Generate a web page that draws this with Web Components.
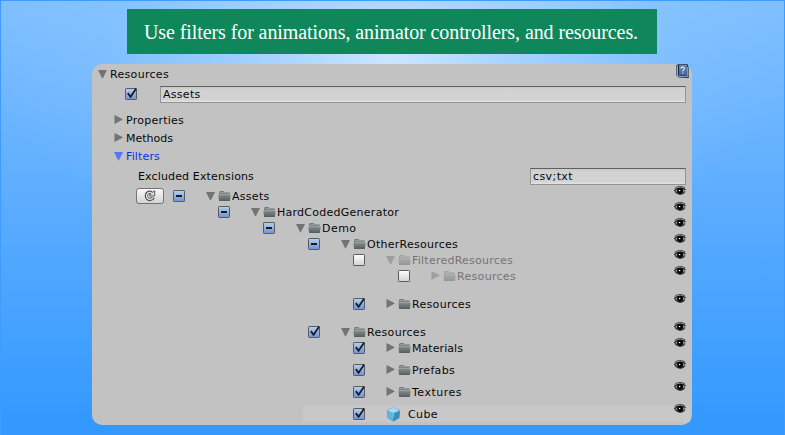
<!DOCTYPE html>
<html lang="en"><head><meta charset="utf-8"><title>Resource filters</title>
<style>
html,body{height:100%;margin:0}
body{overflow:hidden;font:11px/16px "DejaVu Sans",Verdana,sans-serif;color:#080808}
</style></head><body>
<filter-page></filter-page>
<script>
const define=(name,html,init)=>customElements.define(name,class extends HTMLElement{
  connectedCallback(){
    if(this.shadowRoot)return;
    const t=document.createElement('template');
    t.innerHTML=html;
    this.attachShadow({mode:'open'}).append(t.content.cloneNode(true));
    if(init)init(this,this.shadowRoot);
  }
});

// Label whose tracking is set so that its text spans the given width.
define('ui-label','<style>:host{display:block;white-space:pre;line-height:16px;padding-top:var(--drop,0)}span{display:inline-block}</style><span><slot></slot></span>',(el,root)=>{
  const s=root.querySelector('span'),w=+el.getAttribute('span');
  if(w)s.style.letterSpacing=((w-s.getBoundingClientRect().width)/el.textContent.length)+'px';
});

define('ui-arrow','<style>:host{display:block;width:9px;height:9px;color:#737373}:host([right]){margin-top:-1px}svg{display:block}:host([right]) .d,:host(:not([right])) .r{display:none}</style><svg width="9" height="9"><path class="d" d="M0 0H9L4.9 8.2H4.1z" fill="currentColor"/><path class="r" d="M.5 0L8.4 4.1V4.7L.5 9z" fill="currentColor"/></svg>');

define('ui-check',`<style>:host{display:block;width:14px;height:14px}svg{display:block}
.b{fill:url(#w)}:host([state]) .b{fill:url(#g)}.m,.c{display:none}:host([state=mixed]) .m,:host([state=on]) .c{display:block}</style>
<svg width="14" height="14"><defs><linearGradient id="g" x2="0" y2="1"><stop stop-color="#b8cfee"/><stop offset="1" stop-color="#6f93d0"/></linearGradient><linearGradient id="w" x2="0" y2="1"><stop stop-color="#fff"/><stop offset="1" stop-color="#d2d2d2"/></linearGradient></defs>
<rect class="b" x="1.5" y="1.5" width="11" height="11" rx=".7" stroke="#5b5b5b"/><path class="m" d="M4 6H10V8H4z" fill="#151b24"/><path class="c" d="M3.8 6.1L6.6 9.7L12.2 1.6" fill="none" stroke="#151b2b" stroke-width="1.8"/></svg>`);

define('ui-folder',`<style>:host{display:block;width:13px;height:12px}svg{display:block}</style>
<svg width="13" height="12"><defs><linearGradient id="f" x2="0" y2="1"><stop stop-color="#8a9090"/><stop offset="1" stop-color="#515e60"/></linearGradient></defs><path d="M1 10V2L2 1H5.5L6.5 2H11.5V10z" fill="#747c7c"/><path d="M2 2.7H11" stroke="#a4a9a9" stroke-width=".9"/><path d="M.4 4.9L1 4.2H12.2L12.6 4.9L11.9 11H1.1z" fill="url(#f)"/><path d="M1 4.6H12" stroke="#a1a8a8" stroke-width=".8"/></svg>`);

define('ui-cube',`<style>:host{display:block;width:15px;height:15px}svg{display:block}</style>
<svg width="15" height="15"><path d="M.8 3L7.5 .4L14.2 3L13.5 11L7.5 14.7L1.5 11z" fill="#4c9fcb"/><path d="M1.3 3.2L7.5 .8L13.7 3.2L7.5 5.8z" fill="#a6dcf2"/><path d="M1.3 3.4L7.5 6V14.1L1.9 10.7z" fill="#5db4df"/><path d="M13.7 3.4L7.5 6V14.1L13.1 10.7z" fill="#3c8bb8"/><path d="M1.5 3.4L7.5 6L13.5 3.4M7.5 6V10" fill="none" stroke="#8dd2ef" stroke-width=".7"/></svg>`);

define('ui-eye',`<style>:host{display:block;width:12px;height:9px}svg{display:block}</style>
<svg width="12" height="9"><path d="M.5 4.6Q2 2.2 6 2.1Q10 2.2 11.5 3.9Q10.4 7.6 6.6 8.2Q2.6 8 .5 4.6z" fill="#9a9a9a"/><path d="M.2 4.9Q2.2 2.3 6 2.1Q9.6 2 11.6 3.8M1 5.3Q3 8.3 6.6 8.2Q9.6 8 11 5.5" fill="none" stroke="#222" stroke-width="1.1"/><path d="M.6 2.5Q2.6 .6 5.6 .5Q9.3 .4 11.3 2.2" fill="none" stroke="#444" stroke-width="1"/><circle cx="6.1" cy="4.8" r="3.1" fill="#050505"/><circle cx="5.6" cy="4.5" r=".8" fill="#fff"/></svg>`);

define('ui-book',`<style>:host{display:block;width:14px;height:15px}svg{display:block}</style>
<svg width="14" height="15"><defs><linearGradient id="k" x2="0" y2="1"><stop stop-color="#7286a8"/><stop offset="1" stop-color="#3d659a"/></linearGradient></defs><path d="M.2 1.5L2 .3H11.8V2L12.7 3V14L2.8 13.5L.2 11.5z" fill="#15294a"/><path d="M1.3 1.6V11.2L2.5 12.4" stroke="#a7b9cd" fill="none" stroke-width="1.2"/><path d="M3 1H11V11.3H3z" fill="url(#k)"/><path d="M2.8 12.4H11.7V3" stroke="#c3d0dc" fill="none" stroke-width=".8"/><path d="M4.8 4.6Q5.1 3.2 6.7 3.2Q8.7 3.3 8.4 4.9Q8.3 5.7 6.8 6.5V7.6M6.8 8.6V9.8" stroke="#d5dde8" fill="none" stroke-width="1.2"/></svg>`);

define('ui-field',`<style>:host{display:block;box-sizing:border-box;height:17px;border:1px solid #949494;border-top:1px solid #606060;background:linear-gradient(#cacaca,#d2d2d2 3px,#d3d3d3 13px,#e1e1e1 14px);padding-left:2px}</style><slot></slot>`);

define('ui-refresh',`<style>:host{display:block;box-sizing:border-box;width:28px;height:16px;border:1px solid #737373;border-radius:3px;background:linear-gradient(#fafafa,#d3d3d3)}svg{display:block;margin:1px auto 0}</style>
<svg width="12" height="12"><path d="M8.2 3.4Q7 2 5.3 2.2Q2.3 2.7 2.4 6.1Q2.7 9.4 5.9 9.5Q8.4 9.4 9.4 7.4" fill="none" stroke="#505050" stroke-width="3.3"/><path d="M10.7 .6V6H5.7V4.6L7.2 3.9z" fill="#dcdcdc" stroke="#505050" stroke-width=".9"/><path d="M9 2.9L8.2 3.6Q7 2.2 5.3 2.4Q2.5 2.8 2.6 6.1Q2.9 9.2 5.9 9.3Q8 9.2 9.1 7.6" fill="none" stroke="#e0e0e0" stroke-width="1.3"/></svg>`);

define('ui-foldout',`<style>:host{display:flex;height:18px;align-items:center;--drop:1px}ui-arrow{color:inherit;margin-right:3px}.i{color:var(--arrow,#737373)}</style><span class="i"><ui-arrow></ui-arrow></span><slot></slot>`,(el,r)=>{if(el.hasAttribute('right'))r.querySelector('ui-arrow').setAttribute('right','')});

define('tree-row',`<style>:host{display:flex;height:16px;align-items:center;--drop:1px}
ui-check{margin-right:20px}ui-arrow{margin-right:2px}ui-folder{margin:0 1px 0 1px}
ui-eye{margin:-11px 6px 0 auto}ui-cube{margin-right:7px}
:host([dim]) .item{opacity:.43}.item{display:flex;align-items:center;height:16px}</style>
<slot name="lead"></slot><ui-check></ui-check><div class="item"></div><ui-eye></ui-eye>`,(el,r)=>{
  const s=el.getAttribute('state');
  if(s)r.querySelector('ui-check').setAttribute('state',s);
  r.querySelector('.item').innerHTML=el.hasAttribute('cube')?'<ui-cube></ui-cube><slot></slot>':`<ui-arrow ${el.hasAttribute('closed')?'right':''}></ui-arrow><ui-folder></ui-folder><slot></slot>`;
});

define('asset-tree','<style>:host{display:block}</style><div></div>',(el,r)=>{
  const rows=[
    ['Assets',0,'mixed',37.5],['HardCodedGenerator',1,'mixed',122],['Demo',2,'mixed',34.5],['OtherResources',3,'mixed',91],
    ['FilteredResources',4,'',101],['Resources',5,'',59],['Resources',4,'on',59],
    ['Resources',3,'on',59],['Materials',4,'on',51],['Prefabs',4,'on',43],
    ['Textures',4,'on',50],['Cube',4,'on',30]];
  const flags={4:'dim',5:'dim closed',6:'closed',8:'closed',9:'closed',10:'closed',11:'cube'};
  const gaps={6:12,7:12,9:6,10:6,11:6};
  r.querySelector('div').innerHTML=rows.map(([name,depth,state,w],i)=>{
    const gap=gaps[i]||0;
    const style=flags[i]==='cube'?`margin:${gap}px 0 0 211px;padding-left:49px;background:linear-gradient(90deg,#c8c8c8 387px,transparent 387px)`:`margin-top:${gap}px;padding-left:${depth?80+depth*45:44}px`;
    return `<tree-row ${flags[i]||''} ${state?`state="${state}"`:''} style="${style}">${depth?'':'<ui-refresh slot="lead" style="margin-right:8px"></ui-refresh>'}<ui-label span="${w}">${name}</ui-label></tree-row>`;
  }).join('');
});

define('resource-panel',`<style>:host{display:flex;flex-direction:column;box-sizing:border-box;width:600px;height:361px;border-radius:10px;background:#c2c2c2}
.head{display:flex;justify-content:space-between;height:22px;padding:0 2px 0 6px}.head ui-foldout{height:20px}
.path{display:flex;height:17px;padding:0 6px 0 32px;gap:21px}.path ui-check{margin-top:1px}.path ui-field{flex:1;margin-left:1px}
ui-field{--drop:0}.folds{padding:8px 0 0 22px}.ext{display:flex;justify-content:space-between;height:17px;padding:3px 6px 0 46px;margin-bottom:3px;--drop:1px}.ext ui-field{width:156px}.blue{color:#1031e8;--arrow:#5674f4}</style>
<div class="head"><ui-foldout><ui-label span="59">Resources</ui-label></ui-foldout><ui-book></ui-book></div>
<div class="path"><ui-check state="on"></ui-check><ui-field><ui-label span="37.5">Assets</ui-label></ui-field></div>
<div class="folds"><ui-foldout right><ui-label span="58">Properties</ui-label></ui-foldout><ui-foldout right><ui-label span="47">Methods</ui-label></ui-foldout><ui-foldout class="blue"><ui-label span="34">Filters</ui-label></ui-foldout></div>
<div class="ext"><ui-label span="116">Excluded Extensions</ui-label><ui-field><ui-label span="40">csv;txt</ui-label></ui-field></div>
<asset-tree></asset-tree>`);

define('page-banner',`<style>:host{display:flex;justify-content:center;align-items:center;box-sizing:border-box;width:530px;height:45px;padding-right:2px;background:#10875a;color:#fff;font:20px/24px "Liberation Serif","Times New Roman",serif}</style><ui-label span="494">Use filters for animations, animator controllers, and resources.</ui-label>`);

define('filter-page',`<style>:host{display:flex;flex-direction:column;box-sizing:border-box;width:785px;height:435px;padding:8px 0 0 91px;border:1px solid #3f9cff;border-bottom:0;background:radial-gradient(ellipse 400px 200px at 390px 60px,rgba(225,240,255,.8),rgba(205,230,255,.5) 35%,rgba(170,213,255,.14) 72%,rgba(128,191,255,0)),linear-gradient(#80c0ff,#59abff 50%,#3399ff 97%)}page-banner{margin:0 0 10px 35px}</style><page-banner></page-banner><resource-panel></resource-panel>`);
</script></body></html>
